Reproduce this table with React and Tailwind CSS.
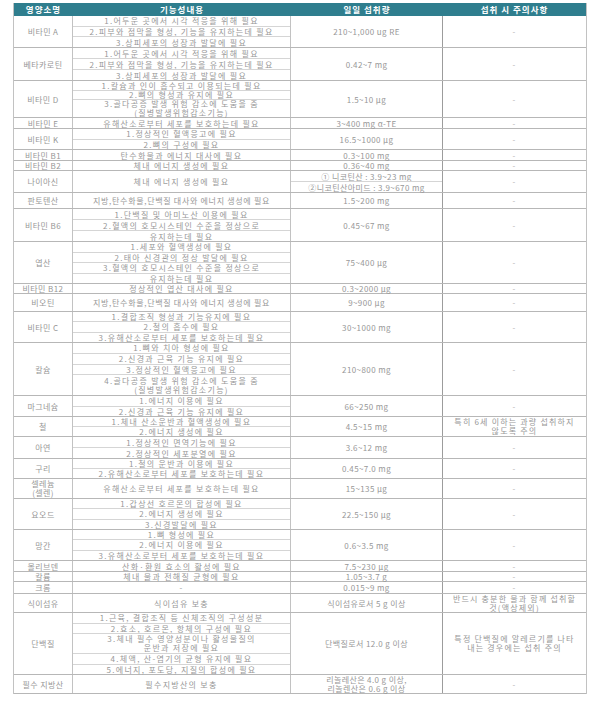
import React from 'react';

const rows = [
  { name: '비타민 A', h: 'h-[32px]', amount: '210~1,000 ug RE', items: ['1.어두운 곳에서 시각 적응을 위해 필요', '2.피부와 점막을 형성, 기능을 유지하는데 필요', '3.상피세포의 성장과 발달에 필요'] },
  { name: '베타카로틴', h: 'h-[33px]', amount: '0.42~7 mg', items: ['1.어두운 곳에서 시각 적응을 위해 필요', '2.피부와 점막을 형성, 기능을 유지하는데 필요', '3.상피세포의 성장과 발달에 필요'] },
  { name: '비타민 D', h: 'h-[37px]', amount: '1.5~10 μg', items: ['1.칼슘과 인이 흡수되고 이용되는데 필요', '2.뼈의 형성과 유지에 필요', ['3.골다공증 발생 위험 감소에 도움을 줌', '(질병발생위험감소기능)']] },
  { name: '비타민 E', h: 'h-[11px]', amount: '3~400 mg α-TE', items: ['유해산소로부터 세포를 보호하는데 필요'] },
  { name: '비타민 K', h: 'h-[21px]', amount: '16.5~1000 μg', items: ['1.정상적인 혈액응고에 필요', '2.뼈의 구성에 필요'] },
  { name: '비타민 B1', h: 'h-[11px]', amount: '0.3~100 mg', items: ['탄수화물과 에너지 대사에 필요'] },
  { name: '비타민 B2', h: 'h-[10px]', amount: '0.36~40 mg', items: ['체내 에너지 생성에 필요'] },
  { name: '나이아신', h: 'h-[22px]', split: ['① 니코틴산 : 3.9~23 mg', '②니코틴산아미드 : 3.9~670 mg'], items: ['체내 에너지 생성에 필요'] },
  { name: '판토텐산', h: 'h-[16px]', amount: '1.5~200 mg', items: ['지방,탄수화물,단백질 대사와 에너지 생성에 필요'], tight: true },
  { name: '비타민 B6', h: 'h-[33px]', amount: '0.45~67 mg', items: ['1.단백질 및 아미노산 이용에 필요', '2.혈액의 호모시스테인 수준을 정상으로', '유지하는데 필요'] },
  { name: '엽산', h: 'h-[42px]', amount: '75~400 μg', items: ['1.세포와 혈액생성에 필요', '2.태아 신경관의 정상 발달에 필요', '3.혈액의 호모시스테인 수준을 정상으로', '유지하는데 필요'] },
  { name: '비타민 B12', h: 'h-[10px]', amount: '0.3~2000 μg', items: ['정상적인 엽산 대사에 필요'] },
  { name: '비오틴', h: 'h-[18px]', amount: '9~900 μg', items: ['지방,탄수화물,단백질 대사와 에너지 생성에 필요'], tight: true },
  { name: '비타민 C', h: 'h-[31px]', amount: '30~1000 mg', items: ['1.결합조직 형성과 기능유지에 필요', '2.철의 흡수에 필요', '3.유해산소로부터 세포를 보호하는데 필요'] },
  { name: '칼슘', h: 'h-[53px]', amount: '210~800 mg', items: ['1.뼈와 치아 형성에 필요', '2.신경과 근육 기능 유지에 필요', '3.정상적인 혈액응고에 필요', ['4.골다공증 발생 위험 감소에 도움을 줌', '(질병발생위험감소기능)']] },
  { name: '마그네슘', h: 'h-[21px]', amount: '66~250 mg', items: ['1.에너지 이용에 필요', '2.신경과 근육 기능 유지에 필요'] },
  { name: '철', h: 'h-[20px]', amount: '4.5~15 mg', note: ['특히 6세 이하는 과량 섭취하지', '않도록 주의'], items: ['1.체내 산소운반과 혈액생성에 필요', '2.에너지 생성에 필요'] },
  { name: '아연', h: 'h-[22px]', amount: '3.6~12 mg', items: ['1.정상적인 면역기능에 필요', '2.정상적인 세포분열에 필요'] },
  { name: '구리', h: 'h-[20px]', amount: '0.45~7.0 mg', items: ['1.철의 운반과 이용에 필요', '2.유해산소로부터 세포를 보호하는데 필요'] },
  { name: ['셀레늄', '(셀렌)'], h: 'h-[20px]', amount: '15~135 μg', items: ['유해산소로부터 세포를 보호하는데 필요'] },
  { name: '요오드', h: 'h-[31px]', amount: '22.5~150 μg', items: ['1.갑상선 호르몬의 합성에 필요', '2.에너지 생성에 필요', '3.신경발달에 필요'] },
  { name: '망간', h: 'h-[31px]', amount: '0.6~3.5 mg', items: ['1.뼈 형성에 필요', '2.에너지 이용에 필요', '3.유해산소로부터 세포를 보호하는데 필요'] },
  { name: '몰리브덴', h: 'h-[11px]', amount: '7.5~230 μg', items: ['산화·환원 효소의 활성에 필요'] },
  { name: '칼륨', h: 'h-[10px]', amount: '1.05~3.7 g', items: ['체내 물과 전해질 균형에 필요'] },
  { name: '크롬', h: 'h-[12px]', amount: '0.015~9 mg', items: ['-'] },
  { name: '식이섬유', h: 'h-[19px]', amount: '식이섬유로서 5 g 이상', note: ['반드시 충분한 물과 함께 섭취할', '것(액상제외)'], items: ['식이섬유 보충'] },
  { name: '단백질', h: 'h-[62px]', amount: '단백질로서 12.0 g 이상', note: ['특정 단백질에 알레르기를 나타', '내는 경우에는 섭취 주의'], items: ['1.근육, 결합조직 등 신체조직의 구성성분', '2.효소, 호르몬, 항체의 구성에 필요', ['3.체내 필수 영양성분이나 활성물질의', '운반과 저장에 필요'], '4.체액, 산-염기의 균형 유지에 필요', '5.에너지, 포도당, 지질의 합성에 필요'] },
  { name: '필수 지방산', h: 'h-[19px]', amount: ['리놀레산은 4.0 g 이상,', '리놀렌산은 0.6 g 이상'], items: ['필수지방산의 보충'] },
];

const Lines = ({ v }) =>
  Array.isArray(v) ? v.map((t, i) => <div key={i} className="leading-[8px]">{t}</div>) : v;

const Group = ({ r }) => (
  <div className={`flex ${r.h} border-b border-[#b7b7b7]`}>
    <div className="w-[59px] shrink-0 flex flex-col items-center justify-center gap-[1px] text-center border-r border-[#c2c2c2] leading-[9px] tracking-[0.4px] whitespace-nowrap">
      <Lines v={r.name} />
    </div>
    <div className={`w-[218px] shrink-0 flex flex-col border-r border-[#c2c2c2] whitespace-nowrap ${r.tight ? 'tracking-[0.7px]' : 'tracking-[1.3px]'}`}>
      {r.items.map((it, i) => (
        <div
          key={i}
          className={`min-h-0 flex flex-col items-center justify-center gap-[1px] leading-[9px] ${Array.isArray(it) ? 'flex-[2]' : 'flex-1'} ${i > 0 ? 'border-t border-[#d5d5d5]' : ''}`}
        >
          <Lines v={it} />
        </div>
      ))}
    </div>
    <div className="w-[152px] shrink-0 flex flex-col border-r border-[#9c9c9c] tracking-[0.4px] whitespace-nowrap">
      {r.split ? (
        r.split.map((t, i) => (
          <div key={i} className={`flex-1 min-h-0 flex items-center justify-center leading-[9px] ${i > 0 ? 'border-t border-[#d5d5d5]' : ''}`}>
            {t}
          </div>
        ))
      ) : (
        <div className="flex-1 flex flex-col items-center justify-center gap-[1px] text-center leading-[9px]">
          <Lines v={r.amount} />
        </div>
      )}
    </div>
    <div className="flex-1 flex flex-col items-center justify-center gap-[1px] text-center leading-[9px] tracking-[1.2px] whitespace-nowrap">
      {r.note ? <Lines v={r.note} /> : <span className="text-[#b3b3b3]">-</span>}
    </div>
  </div>
);

export default function App() {
  return (
    <div className="w-[596px] h-[706px] bg-white pt-[3px] pl-[13px] font-['Noto_Sans_CJK_KR','Noto_Sans',sans-serif] text-[8px] text-[#979797]">
      <div className="w-[574px] border-x border-[#c2c2c2]">
        {/* Header */}
        <div className="flex h-[13px] bg-[#2f7e8e] text-white text-[8.5px] font-bold tracking-[1px] leading-[13px] whitespace-nowrap">
          <div className="w-[59px] text-center">영양소명</div>
          <div className="w-[218px] text-center">기능성내용</div>
          <div className="w-[152px] text-center">일일 섭취량</div>
          <div className="flex-1 text-center">섭취 시 주의사항</div>
        </div>

        {rows.map((r, i) => (
          <Group key={i} r={r} />
        ))}
      </div>
    </div>
  );
}
